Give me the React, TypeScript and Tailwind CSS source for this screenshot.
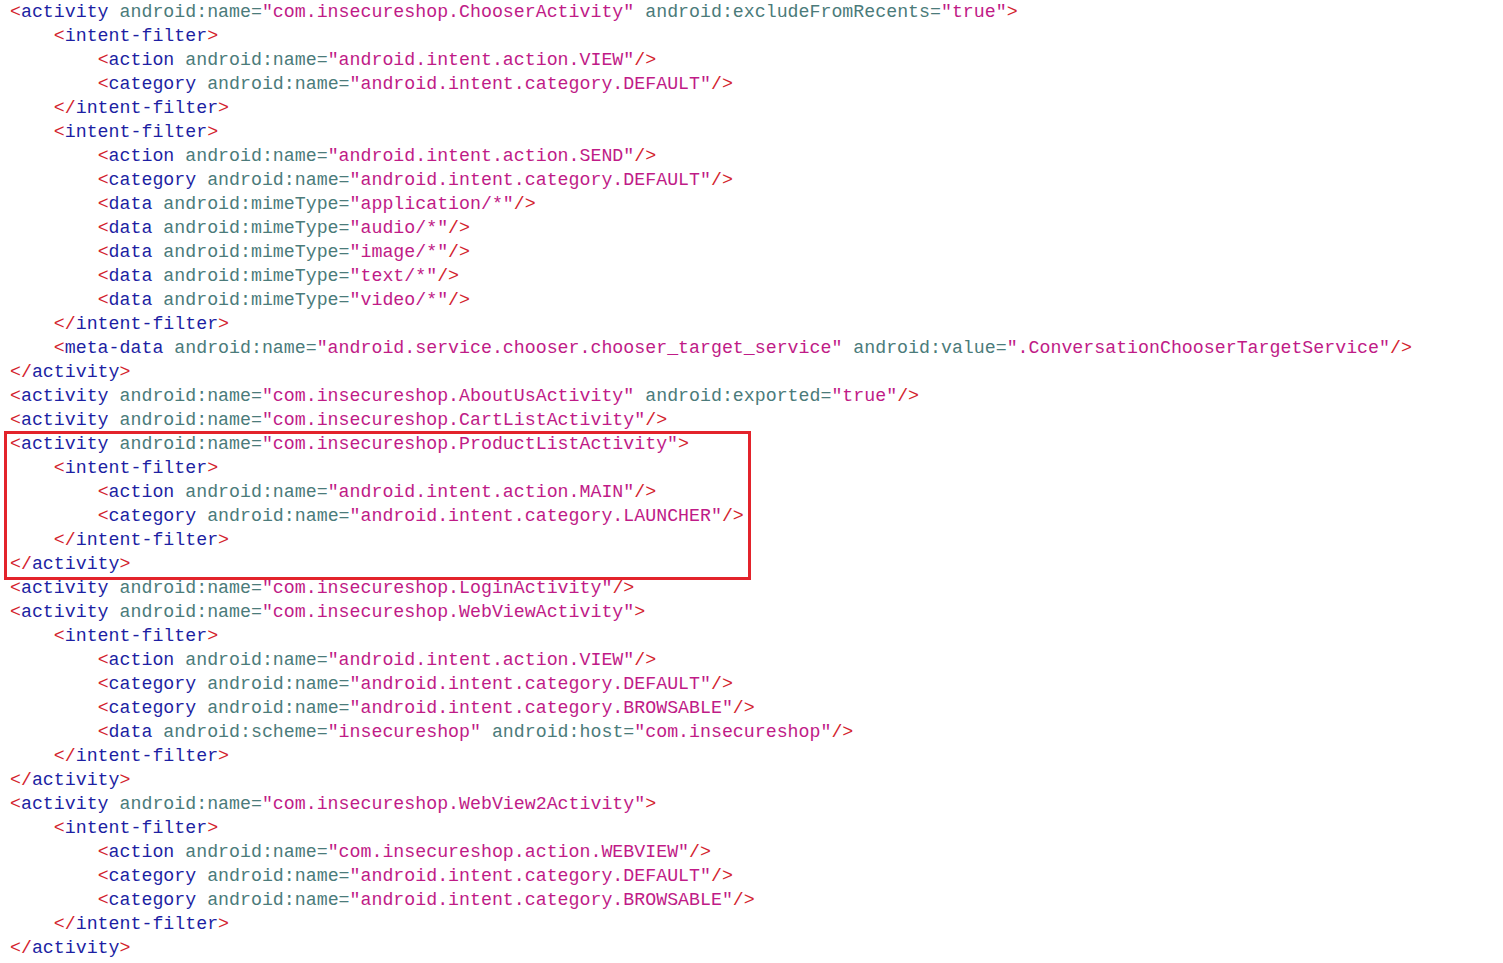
import React from 'react';

const LINES = [
  '<activity android:name="com.insecureshop.ChooserActivity" android:excludeFromRecents="true">',
  '    <intent-filter>',
  '        <action android:name="android.intent.action.VIEW"/>',
  '        <category android:name="android.intent.category.DEFAULT"/>',
  '    </intent-filter>',
  '    <intent-filter>',
  '        <action android:name="android.intent.action.SEND"/>',
  '        <category android:name="android.intent.category.DEFAULT"/>',
  '        <data android:mimeType="application/*"/>',
  '        <data android:mimeType="audio/*"/>',
  '        <data android:mimeType="image/*"/>',
  '        <data android:mimeType="text/*"/>',
  '        <data android:mimeType="video/*"/>',
  '    </intent-filter>',
  '    <meta-data android:name="android.service.chooser.chooser_target_service" android:value=".ConversationChooserTargetService"/>',
  '</activity>',
  '<activity android:name="com.insecureshop.AboutUsActivity" android:exported="true"/>',
  '<activity android:name="com.insecureshop.CartListActivity"/>',
  '<activity android:name="com.insecureshop.ProductListActivity">',
  '    <intent-filter>',
  '        <action android:name="android.intent.action.MAIN"/>',
  '        <category android:name="android.intent.category.LAUNCHER"/>',
  '    </intent-filter>',
  '</activity>',
  '<activity android:name="com.insecureshop.LoginActivity"/>',
  '<activity android:name="com.insecureshop.WebViewActivity">',
  '    <intent-filter>',
  '        <action android:name="android.intent.action.VIEW"/>',
  '        <category android:name="android.intent.category.DEFAULT"/>',
  '        <category android:name="android.intent.category.BROWSABLE"/>',
  '        <data android:scheme="insecureshop" android:host="com.insecureshop"/>',
  '    </intent-filter>',
  '</activity>',
  '<activity android:name="com.insecureshop.WebView2Activity">',
  '    <intent-filter>',
  '        <action android:name="com.insecureshop.action.WEBVIEW"/>',
  '        <category android:name="android.intent.category.DEFAULT"/>',
  '        <category android:name="android.intent.category.BROWSABLE"/>',
  '    </intent-filter>',
  '</activity>',
];

const XmlLine: React.FC<{ text: string }> = ({ text }) => {
  const m = text.match(/^(\s*)(<\/?)([\w-]+)(.*?)(\/?>)$/);
  if (!m) return <div className="h-6">{text}</div>;
  const [, indent, open, name, rest, close] = m;
  const attrs = [...rest.matchAll(/(\s+)([\w:]+=)("[^"]*")/g)];
  return (
    <div className="h-6 leading-6">
      {indent}
      <span className="text-[#d3232e]">{open}</span>
      <span className="text-[#1d1fa3]">{name}</span>
      {attrs.map((a, i) => (
        <React.Fragment key={i}>
          {a[1]}
          <span className="text-[#4b7b7a]">{a[2]}</span>
          <span className="text-[#c01b87]">{a[3]}</span>
        </React.Fragment>
      ))}
      <span className="text-[#d3232e]">{close}</span>
    </div>
  );
};

export default function App() {
  return (
    <div className="w-[1503px] h-[963px] bg-white overflow-hidden">
      <div className="relative pl-[10px] whitespace-pre font-['Liberation_Mono',monospace] text-[18.25px]">
        {LINES.map((l, i) => <XmlLine key={i} text={l} />)}
        <div className="absolute left-[4px] top-[431px] w-[747px] h-[149px] border-[3px] border-[#e3232b]" />
      </div>
    </div>
  );
}
